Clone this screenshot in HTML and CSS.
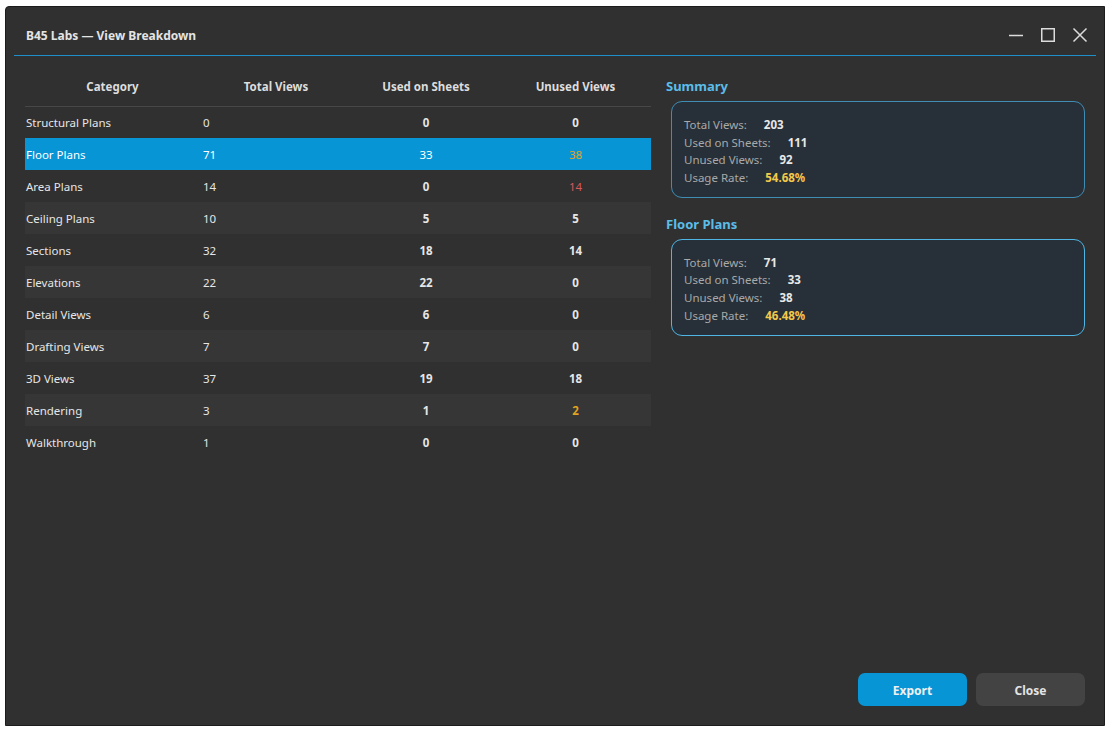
FILE: index.html
```html
<!DOCTYPE html>
<html>
<head>
<meta charset="utf-8">
<link rel="stylesheet" href="styles.css">
</head>
<body>
<div class="window">
  <div class="titlebar">
    <div class="title">B45 Labs — View Breakdown</div>
    <div class="controls">
      <svg class="ctl" width="16" height="16" viewBox="0 0 16 16"><path d="M1 8.5H15" stroke="#dcdcdc" stroke-width="1.5" fill="none"/></svg>
      <svg class="ctl" width="16" height="16" viewBox="0 0 16 16"><rect x="1.75" y="1.75" width="12.5" height="12.5" stroke="#dcdcdc" stroke-width="1.5" fill="none"/></svg>
      <svg class="ctl" width="16" height="16" viewBox="0 0 16 16"><path d="M1.5 1.5L14.5 14.5M14.5 1.5L1.5 14.5" stroke="#dcdcdc" stroke-width="1.5" fill="none"/></svg>
    </div>
  </div>
  <div class="sep"></div>
  <div class="content">
    <div class="main">
      <table class="grid">
        <thead>
          <tr><th class="c1">Category</th><th class="c2">Total Views</th><th class="c3">Used on Sheets</th><th class="c4">Unused Views</th></tr>
        </thead>
        <tbody>
          <tr><td class="c1">Structural Plans</td><td class="c2">0</td><td class="c3">0</td><td class="c4">0</td></tr>
          <tr class="sel"><td class="c1">Floor Plans</td><td class="c2">71</td><td class="c3 thin">33</td><td class="c4 orange">38</td></tr>
          <tr><td class="c1">Area Plans</td><td class="c2">14</td><td class="c3">0</td><td class="c4 red">14</td></tr>
          <tr class="alt"><td class="c1">Ceiling Plans</td><td class="c2">10</td><td class="c3">5</td><td class="c4">5</td></tr>
          <tr><td class="c1">Sections</td><td class="c2">32</td><td class="c3">18</td><td class="c4">14</td></tr>
          <tr class="alt"><td class="c1">Elevations</td><td class="c2">22</td><td class="c3">22</td><td class="c4">0</td></tr>
          <tr><td class="c1">Detail Views</td><td class="c2">6</td><td class="c3">6</td><td class="c4">0</td></tr>
          <tr class="alt"><td class="c1">Drafting Views</td><td class="c2">7</td><td class="c3">7</td><td class="c4">0</td></tr>
          <tr><td class="c1">3D Views</td><td class="c2">37</td><td class="c3">19</td><td class="c4">18</td></tr>
          <tr class="alt"><td class="c1">Rendering</td><td class="c2">3</td><td class="c3">1</td><td class="c4 orange">2</td></tr>
          <tr><td class="c1">Walkthrough</td><td class="c2">1</td><td class="c3">0</td><td class="c4">0</td></tr>
        </tbody>
      </table>
    </div>
    <div class="side">
      <div class="heading">Summary</div>
      <div class="card dim">
        <div class="line"><span class="lbl">Total Views:</span><span class="val">203</span></div>
        <div class="line"><span class="lbl">Used on Sheets:</span><span class="val">111</span></div>
        <div class="line"><span class="lbl">Unused Views:</span><span class="val">92</span></div>
        <div class="line"><span class="lbl">Usage Rate:</span><span class="val yellow">54.68%</span></div>
      </div>
      <div class="heading second">Floor Plans</div>
      <div class="card">
        <div class="line"><span class="lbl">Total Views:</span><span class="val">71</span></div>
        <div class="line"><span class="lbl">Used on Sheets:</span><span class="val">33</span></div>
        <div class="line"><span class="lbl">Unused Views:</span><span class="val">38</span></div>
        <div class="line"><span class="lbl">Usage Rate:</span><span class="val yellow">46.48%</span></div>
      </div>
      <div class="buttons">
        <button class="btn primary">Export</button>
        <button class="btn">Close</button>
      </div>
    </div>
  </div>
</div>
</body>
</html>
```
FILE: styles.css
```css
* { box-sizing: border-box; }
html, body { margin: 0; padding: 0; background: #ffffff; }
body {
  font-family: "Noto Sans", "Open Sans", sans-serif;
  font-size: 11.5px;
  color: #e6e6e6;
}
.window {
  margin: 6px 0 0 5px;
  width: 1100px;
  height: 720px;
  background: #303030;
  border: 1px solid #1c1c1c;
  border-top-left-radius: 4px;
  display: flex;
  flex-direction: column;
}
.titlebar {
  height: 48px;
  display: flex;
  align-items: center;
  justify-content: space-between;
  padding: 8px 16px 0 20px;
}
.title {
  font-size: 12px;
  font-weight: 700;
  color: #e4e4e4;
}
.controls {
  display: flex;
  gap: 16px;
  align-items: center;
}
.ctl { display: block; }
.sep {
  height: 1px;
  margin: 0 8px;
  background: #1e8fc8;
}
.content {
  flex: 1;
  display: flex;
  padding: 12px 19px 19px 19px;
  gap: 15px;
}
.main { width: 626px; }
.grid {
  border-collapse: collapse;
  table-layout: fixed;
  width: 626px;
}
.grid th {
  height: 38px;
  font-weight: 700;
  color: #dddddd;
  text-align: center;
  border-bottom: 1px solid #474747;
  padding: 0;
}
.grid td {
  height: 32px;
  padding: 0;
  white-space: nowrap;
}
.grid .c1 { width: 175px; }
.grid .c2 { width: 152px; }
.grid .c3 { width: 148px; }
.grid .c4 { width: 151px; }
.grid td.c1 { padding-left: 1px; }
.grid td.c2 { padding-left: 3px; }
.grid td.c3, .grid td.c4 { text-align: center; font-weight: 700; }
.grid td.thin { font-weight: 400; }
.grid td.red { font-weight: 400; }
.grid tr.alt td { background: #363636; }
.grid tr.sel td { background: #0795d6; color: #ffffff; }
.grid tr.sel td.c4 { font-weight: 400; }
.orange { color: #e0a322 !important; }
.red { color: #d4585c; }

.side {
  flex: 1;
  display: flex;
  flex-direction: column;
  padding-top: 8px;
}
.heading {
  font-size: 13px;
  font-weight: 700;
  color: #5bbde9;
  line-height: 20px;
  height: 20px;
  margin-bottom: 5px;
}
.heading.second { margin-top: 16px; margin-bottom: 5px; }
.card {
  margin-left: 5px;
  margin-right: 0;
  background: #273038;
  border: 1px solid #4eb5e4;
  border-radius: 11px;
  padding: 14px 12px 10px 12px;
}
.card.dim { border-color: #3f8db5; }
.line {
  line-height: 17.7px;
  height: 17.7px;
  white-space: nowrap;
}
.lbl { color: #a9a9a9; }
.val {
  font-weight: 700;
  color: #e8e8e8;
  margin-left: 17px;
}
.val.yellow { color: #f2c94b; }
.buttons {
  margin-top: auto;
  display: flex;
  justify-content: flex-end;
  gap: 9px;
}
.btn {
  width: 109px;
  height: 33px;
  border: none;
  border-radius: 7px;
  background: #434343;
  color: #e4e4e4;
  font-family: "Noto Sans", "Open Sans", sans-serif;
  font-size: 12px;
  font-weight: 700;
  padding-top: 2px;
}
.btn.primary { background: #0795d6; color: #f0f0f0; }
```
